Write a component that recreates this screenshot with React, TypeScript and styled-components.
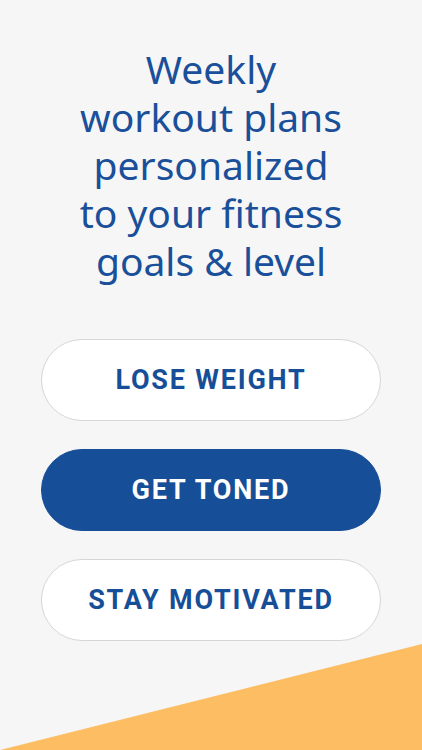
import styled, { createGlobalStyle } from "styled-components";

const GlobalStyle = createGlobalStyle`
  html, body {
    margin: 0;
    padding: 0;
    background: #f6f6f6;
  }
`;

const goals = [
  { label: "LOSE WEIGHT", active: false },
  { label: "GET TONED", active: true },
  { label: "STAY MOTIVATED", active: false },
];

export default function App() {
  return (
    <>
      <GlobalStyle />
      <Screen>
        <Headline>
          Weekly
          <br />
          workout plans
          <br />
          personalized
          <br />
          to your fitness
          <br />
          goals &amp; level
        </Headline>
        <Options>
          {goals.map((g) => (
            <GoalButton key={g.label} $active={g.active}>
              {g.label}
            </GoalButton>
          ))}
        </Options>
        <Corner viewBox="0 0 422 106" preserveAspectRatio="none">
          <polygon points="0,106 422,0 422,106" fill="#fdbd63" />
        </Corner>
      </Screen>
    </>
  );
}

const Screen = styled.div`
  position: relative;
  width: 422px;
  height: 750px;
  overflow: hidden;
  background: #f6f6f6;
  display: flex;
  flex-direction: column;
  align-items: center;
  padding-top: 45px;
  box-sizing: border-box;
`;

const Headline = styled.h1`
  margin: 0;
  font-family: "Noto Sans", "Open Sans", sans-serif;
  font-weight: 400;
  font-size: 39px;
  line-height: 48px;
  color: #1a4f9a;
  text-align: center;
`;

const Options = styled.div`
  display: flex;
  flex-direction: column;
  gap: 28px;
  width: 340px;
  margin-top: 54px;
`;

const GoalButton = styled.button<{ $active: boolean }>`
  height: 82px;
  border-radius: 41px;
  border: 1px solid ${(p) => (p.$active ? "#174e98" : "#d6d6d6")};
  background: ${(p) => (p.$active ? "#174e98" : "#ffffff")};
  color: ${(p) => (p.$active ? "#ffffff" : "#174e98")};
  font-family: Roboto, "Liberation Sans", sans-serif;
  font-weight: 700;
  font-size: 27px;
  letter-spacing: 1.8px;
  cursor: pointer;
`;

const Corner = styled.svg`
  position: absolute;
  left: 0;
  bottom: 0;
  width: 422px;
  height: 106px;
`;
